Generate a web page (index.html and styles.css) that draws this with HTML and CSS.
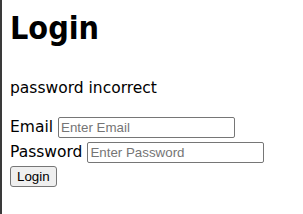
FILE: index.html
```html
<!DOCTYPE html>
<html lang="en">
<head>
  <meta charset="UTF-8">
  <title>Login</title>
  <link rel="stylesheet" href="styles.css">
</head>
<body>
  <div class="page">
    <h1 class="title">Login</h1>
    <p class="message">password incorrect</p>
    <form class="login-form">
      <div class="row">
        <label class="label" for="email">Email</label>
        <input class="field" type="text" id="email" placeholder="Enter Email">
      </div>
      <div class="row">
        <label class="label" for="password">Password</label>
        <input class="field" type="password" id="password" placeholder="Enter Password">
      </div>
      <button class="submit" type="button">Login</button>
    </form>
  </div>
</body>
</html>
```

FILE: styles.css
```css
html {
  background: #fff;
}

body {
  margin: 0;
  min-height: 214px;
  border-left: 2px solid #3a3a3a;
  font-family: 'DejaVu Sans', sans-serif;
  color: #000;
}

.page {
  padding: 0 8px;
}

.title {
  margin: 0;
  padding-top: 9px;
  font-size: 32px;
  font-weight: bold;
  font-stretch: condensed;
}

.message {
  margin: 32px 0 0;
  font-size: 15.5px;
}

.login-form {
  margin: 0;
  padding-top: 20px;
  font-size: 15.5px;
}

.row {
  display: flex;
  align-items: baseline;
  gap: 5px;
  height: 25px;
}

.label:first-child {
  margin-right: 0;
}

.field {
  box-sizing: border-box;
  height: 21px;
  width: 177px;
  font-family: 'Liberation Sans', Arial, sans-serif;
  font-size: 13.33px;
  padding: 1px 2px;
  border: 1px solid #767676;
  border-radius: 2px;
}

.field::placeholder {
  color: #757575;
}

.submit {
  box-sizing: border-box;
  height: 21px;
  margin-top: -5px;
  font-family: 'Liberation Sans', Arial, sans-serif;
  font-size: 13.33px;
  padding: 1px 6px;
  background: #efefef;
  border: 1px solid #767676;
  border-radius: 3px;
  color: #000;
}
```
